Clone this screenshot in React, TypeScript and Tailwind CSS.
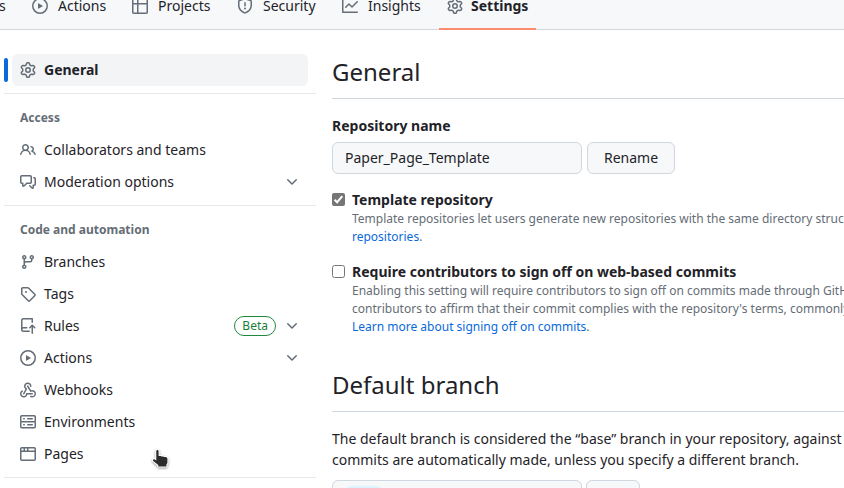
import React from "react";

const ICONS = {
  play: "M8 0a8 8 0 1 1 0 16A8 8 0 0 1 8 0ZM1.5 8a6.5 6.5 0 1 0 13 0 6.5 6.5 0 0 0-13 0Zm4.879-2.773 4.264 2.559a.25.25 0 0 1 0 .428l-4.264 2.559A.25.25 0 0 1 6 10.559V5.442a.25.25 0 0 1 .379-.215Z",
  table: "M0 1.75C0 .784.784 0 1.75 0h12.5C15.216 0 16 .784 16 1.75v12.5A1.75 1.75 0 0 1 14.25 16H1.75A1.75 1.75 0 0 1 0 14.25ZM6.5 6.5v8h7.75a.25.25 0 0 0 .25-.25V6.5Zm8-1.5V1.75a.25.25 0 0 0-.25-.25H6.5V5Zm-13 1.5v7.75c0 .138.112.25.25.25H5v-8ZM5 5V1.5H1.75a.25.25 0 0 0-.25.25V5Z",
  shield: "M7.467.133a1.748 1.748 0 0 1 1.066 0l5.25 1.68A1.75 1.75 0 0 1 15 3.48V7c0 1.566-.32 3.182-1.303 4.682-.983 1.498-2.585 2.813-5.032 3.855a1.697 1.697 0 0 1-1.33 0c-2.447-1.042-4.049-2.357-5.032-3.855C1.32 10.182 1 8.566 1 7V3.48a1.75 1.75 0 0 1 1.217-1.667Zm.61 1.429a.25.25 0 0 0-.153 0l-5.25 1.68a.25.25 0 0 0-.174.238V7c0 1.358.275 2.666 1.057 3.86.784 1.194 2.121 2.34 4.366 3.297a.196.196 0 0 0 .154 0c2.245-.956 3.582-2.104 4.366-3.298C13.225 9.666 13.5 8.36 13.5 7V3.48a.251.251 0 0 0-.174-.237l-5.25-1.68ZM8.75 4.75v3a.75.75 0 0 1-1.5 0v-3a.75.75 0 0 1 1.5 0ZM9 10.5a1 1 0 1 1-2 0 1 1 0 0 1 2 0Z",
  graph: "M1.5 1.75V13.5h13.75a.75.75 0 0 1 0 1.5H.75a.75.75 0 0 1-.75-.75V1.75a.75.75 0 0 1 1.5 0Zm14.28 2.53-5.25 5.25a.75.75 0 0 1-1.06 0L7 7.06 4.28 9.78a.751.751 0 0 1-1.042-.018.751.751 0 0 1-.018-1.042l3.25-3.25a.75.75 0 0 1 1.06 0L10 7.94l4.72-4.72a.751.751 0 0 1 1.042.018.751.751 0 0 1 .018 1.042Z",
  gear: "M8 0a8.2 8.2 0 0 1 .701.031C9.444.095 9.99.645 10.16 1.29l.288 1.107c.018.066.079.158.212.224.231.114.454.243.668.386.123.082.233.09.299.071l1.103-.303c.644-.176 1.392.021 1.82.63.27.385.506.792.704 1.218.315.675.111 1.422-.364 1.891l-.814.806c-.049.048-.098.147-.088.294.016.257.016.515 0 .772-.01.147.038.246.088.294l.814.806c.475.469.679 1.216.364 1.891a7.977 7.977 0 0 1-.704 1.217c-.428.61-1.176.807-1.82.63l-1.102-.302c-.067-.019-.177-.011-.3.071a5.909 5.909 0 0 1-.668.386c-.133.066-.194.158-.211.224l-.29 1.106c-.168.646-.715 1.196-1.458 1.26a8.006 8.006 0 0 1-1.402 0c-.743-.064-1.289-.614-1.458-1.26l-.289-1.106c-.018-.066-.079-.158-.212-.224a5.738 5.738 0 0 1-.668-.386c-.123-.082-.233-.09-.299-.071l-1.103.303c-.644.176-1.392-.021-1.82-.63a8.12 8.12 0 0 1-.704-1.218c-.315-.675-.111-1.422.363-1.891l.815-.806c.05-.048.098-.147.088-.294a6.214 6.214 0 0 1 0-.772c.01-.147-.038-.246-.088-.294l-.815-.806C.635 6.045.431 5.298.746 4.623a7.92 7.92 0 0 1 .704-1.217c.428-.61 1.176-.807 1.82-.63l1.102.302c.067.019.177.011.3-.071.214-.143.437-.272.668-.386.133-.066.194-.158.211-.224l.29-1.106C6.009.645 6.556.095 7.299.03 7.53.01 7.764 0 8 0Zm-.571 1.525c-.036.003-.108.036-.137.146l-.289 1.105c-.147.561-.549.967-.998 1.189-.173.086-.34.183-.5.29-.417.278-.97.423-1.529.27l-1.103-.303c-.109-.03-.175.016-.195.045-.22.312-.412.644-.573.99-.014.031-.021.11.059.19l.815.806c.411.406.562.957.53 1.456a4.709 4.709 0 0 0 0 .582c.032.499-.119 1.05-.53 1.456l-.815.806c-.081.08-.073.159-.059.19.162.346.353.677.573.989.02.03.085.076.195.046l1.102-.303c.56-.153 1.113-.008 1.53.27.161.107.328.204.501.29.447.222.85.629.997 1.189l.289 1.105c.029.109.101.143.137.146a6.6 6.6 0 0 0 1.142 0c.036-.003.108-.036.137-.146l.289-1.105c.147-.561.549-.967.998-1.189.173-.086.34-.183.5-.29.417-.278.97-.423 1.529-.27l1.103.303c.109.029.175-.016.195-.045.22-.313.411-.644.573-.99.014-.031.021-.11-.059-.19l-.815-.806c-.411-.406-.562-.957-.53-1.456a4.709 4.709 0 0 0 0-.582c-.032-.499.119-1.05.53-1.456l.815-.806c.081-.08.073-.159.059-.19a6.464 6.464 0 0 0-.573-.989c-.02-.03-.085-.076-.195-.046l-1.102.303c-.56.153-1.113.008-1.53-.27a4.44 4.44 0 0 0-.501-.29c-.447-.222-.85-.629-.997-1.189l-.289-1.105c-.029-.11-.101-.143-.137-.146a6.6 6.6 0 0 0-1.142 0ZM11 8a3 3 0 1 1-6 0 3 3 0 0 1 6 0ZM9.5 8a1.5 1.5 0 1 0-3.001.001A1.5 1.5 0 0 0 9.5 8Z",
  people: "M2 5.5a3.5 3.5 0 1 1 5.898 2.549 5.508 5.508 0 0 1 3.034 4.084.75.75 0 1 1-1.482.235 4 4 0 0 0-7.9 0 .75.75 0 0 1-1.482-.236A5.507 5.507 0 0 1 3.102 8.05 3.493 3.493 0 0 1 2 5.5ZM11 4a3.001 3.001 0 0 1 2.22 5.018 5.01 5.01 0 0 1 2.56 3.012.749.749 0 0 1-.885.954.752.752 0 0 1-.549-.514 3.507 3.507 0 0 0-2.522-2.372.75.75 0 0 1-.574-.73v-.352a.75.75 0 0 1 .416-.672A1.5 1.5 0 0 0 11 5.5.75.75 0 0 1 11 4Zm-5.5-.5a2 2 0 1 0-.001 3.999A2 2 0 0 0 5.5 3.5Z",
  discussion: "M1.75 1h8.5c.966 0 1.75.784 1.75 1.75v5.5A1.75 1.75 0 0 1 10.25 10H7.061l-2.574 2.573A1.458 1.458 0 0 1 2 11.543V10h-.25A1.75 1.75 0 0 1 0 8.25v-5.5C0 1.784.784 1 1.75 1ZM1.5 2.75v5.5c0 .138.112.25.25.25h1a.75.75 0 0 1 .75.75v2.19l2.72-2.72a.749.749 0 0 1 .53-.22h3.5a.25.25 0 0 0 .25-.25v-5.5a.25.25 0 0 0-.25-.25h-8.5a.25.25 0 0 0-.25.25Zm13 2a.25.25 0 0 0-.25-.25h-.5a.75.75 0 0 1 0-1.5h.5c.966 0 1.75.784 1.75 1.75v5.5A1.75 1.75 0 0 1 14.25 12H14v1.543a1.458 1.458 0 0 1-2.487 1.03L9.22 12.28a.749.749 0 0 1 .326-1.275.749.749 0 0 1 .734.215l2.22 2.22v-2.19a.75.75 0 0 1 .75-.75h1a.25.25 0 0 0 .25-.25Z",
  branch: "M9.5 3.25a2.25 2.25 0 1 1 3 2.122V6A2.5 2.5 0 0 1 10 8.5H6a1 1 0 0 0-1 1v1.128a2.251 2.251 0 1 1-1.5 0V5.372a2.25 2.25 0 1 1 1.5 0v1.836A2.493 2.493 0 0 1 6 7h4a1 1 0 0 0 1-1v-.628A2.25 2.25 0 0 1 9.5 3.25Zm-6 0a.75.75 0 1 0 1.5 0 .75.75 0 0 0-1.5 0Zm8.25-.75a.75.75 0 1 0 0 1.5.75.75 0 0 0 0-1.5ZM4.25 12a.75.75 0 1 0 0 1.5.75.75 0 0 0 0-1.5Z",
  tag: "M1 7.775V2.75C1 1.784 1.784 1 2.75 1h5.025c.464 0 .91.184 1.238.513l6.25 6.25a1.75 1.75 0 0 1 0 2.474l-5.026 5.026a1.75 1.75 0 0 1-2.474 0l-6.25-6.25A1.752 1.752 0 0 1 1 7.775Zm1.5 0c0 .066.026.13.073.177l6.25 6.25a.25.25 0 0 0 .354 0l5.025-5.025a.25.25 0 0 0 0-.354l-6.25-6.25a.25.25 0 0 0-.177-.073H2.75a.25.25 0 0 0-.25.25ZM6 5a1 1 0 1 1 0 2 1 1 0 0 1 0-2Z",
  push: "M1 2.5A2.5 2.5 0 0 1 3.5 0h8.75a.75.75 0 0 1 .75.75v3.5a.75.75 0 0 1-1.5 0V1.5h-8a1 1 0 0 0-1 1v6.708A2.493 2.493 0 0 1 3.5 9h3.25a.75.75 0 0 1 0 1.5H3.5a1 1 0 0 0 0 2h5.75a.75.75 0 0 1 0 1.5H3.5A2.5 2.5 0 0 1 1 11.5Zm13.23 7.79h-.001l-1.224-1.224v6.184a.75.75 0 0 1-1.5 0V9.066L10.28 10.29a.75.75 0 0 1-1.06-1.061l2.505-2.504a.75.75 0 0 1 1.06 0L15.29 9.23a.751.751 0 0 1-.018 1.042.751.751 0 0 1-1.042.018Z",
  webhook: "M5.5 4.25a2.25 2.25 0 0 1 4.5 0 .75.75 0 0 0 1.5 0 3.75 3.75 0 1 0-6.14 2.889l-2.272 4.258a.75.75 0 0 0 1.324.706L7 7.25a.75.75 0 0 0-.309-1.015A2.25 2.25 0 0 1 5.5 4.25ZM7.364 3.607a.75.75 0 0 1 1.03.257l2.608 4.349a3.75 3.75 0 1 1-.628 6.785.75.75 0 0 1 .752-1.299 2.25 2.25 0 1 0-.033-3.88.75.75 0 0 1-1.03-.256L7.107 4.636a.75.75 0 0 1 .257-1.03ZM2.9 8.776A.75.75 0 0 1 2.625 9.8 2.25 2.25 0 1 0 6 11.75a.75.75 0 0 1 .75-.751h5.5a.75.75 0 0 1 0 1.5H7.425a3.751 3.751 0 1 1-5.55-3.998.75.75 0 0 1 1.024.274Z",
  server: "M1.75 1h12.5c.966 0 1.75.784 1.75 1.75v4c0 .372-.116.717-.314 1 .198.283.314.628.314 1v4a1.75 1.75 0 0 1-1.75 1.75H1.75A1.75 1.75 0 0 1 0 12.75v-4c0-.358.109-.707.314-1a1.739 1.739 0 0 1-.314-1v-4C0 1.784.784 1 1.75 1ZM1.5 2.75v4c0 .138.112.25.25.25h12.5a.25.25 0 0 0 .25-.25v-4a.25.25 0 0 0-.25-.25H1.75a.25.25 0 0 0-.25.25Zm.25 5.75a.25.25 0 0 0-.25.25v4c0 .138.112.25.25.25h12.5a.25.25 0 0 0 .25-.25v-4a.25.25 0 0 0-.25-.25ZM7 4.75A.75.75 0 0 1 7.75 4h4.5a.75.75 0 0 1 0 1.5h-4.5A.75.75 0 0 1 7 4.75ZM7.75 10h4.5a.75.75 0 0 1 0 1.5h-4.5a.75.75 0 0 1 0-1.5ZM3 4.75A.75.75 0 0 1 3.75 4h.5a.75.75 0 0 1 0 1.5h-.5A.75.75 0 0 1 3 4.75ZM3.75 10h.5a.75.75 0 0 1 0 1.5h-.5a.75.75 0 0 1 0-1.5Z",
  browser: "M0 2.75C0 1.784.784 1 1.75 1h12.5c.966 0 1.75.784 1.75 1.75v10.5A1.75 1.75 0 0 1 14.25 15H1.75A1.75 1.75 0 0 1 0 13.25ZM14.5 6h-13v7.25c0 .138.112.25.25.25h12.5a.25.25 0 0 0 .25-.25Zm-6-3.5v2h6V2.75a.25.25 0 0 0-.25-.25ZM5 2.5v2h2v-2Zm-3.25 0a.25.25 0 0 0-.25.25V4.5h2v-2Z",
  chevron: "M12.78 5.22a.749.749 0 0 1 0 1.06l-4.25 4.25a.749.749 0 0 1-1.06 0L3.22 6.28a.749.749 0 1 1 1.06-1.06L8 8.939l3.72-3.719a.749.749 0 0 1 1.06 0Z",
};

type IconName = keyof typeof ICONS;

function Icon({ name }: { name: IconName }) {
  return (
    <svg viewBox="0 0 16 16" className="size-4 shrink-0 fill-[#656d76]" aria-hidden="true">
      <path d={ICONS[name]} />
    </svg>
  );
}

function Tab({ icon, label, width, active }: { icon: IconName; label: string; width: string; active?: boolean }) {
  return (
    <div className={`flex h-full shrink-0 items-center pl-2 ${width} ${active ? "gap-2 border-b-2 border-[#fd8c73] pt-0.5 font-bold" : "gap-2.5"}`}>
      <Icon name={icon} />
      <span>{label}</span>
    </div>
  );
}

function NavItem({ icon, label, badge, expandable }: { icon: IconName; label: string; badge?: string; expandable?: boolean }) {
  return (
    <li className="flex h-8 items-center px-2">
      <Icon name={icon} />
      <span className="ml-2 flex-1">{label}</span>
      {badge && (
        <span className="mr-2 flex h-5 items-center rounded-full border border-[#1f883d] px-[7px] text-xs leading-[18px] text-[#1a7f37]">{badge}</span>
      )}
      {expandable && <Icon name="chevron" />}
    </li>
  );
}

function NavGroup({ title, children }: { title: string; children: React.ReactNode }) {
  return (
    <section className="border-t border-[#e6e9ec] px-2 pb-[7px]">
      <h3 className="px-2 pt-[15px] pb-[7px] text-xs leading-[18px] font-bold text-[#656d76]">{title}</h3>
      <ul>{children}</ul>
    </section>
  );
}

export default function App() {
  return (
    <div className="h-[488px] w-[844px] overflow-hidden bg-white font-['Noto_Sans',sans-serif] text-sm leading-[21px] text-[#1f2328]">
      <header className="flex h-[30px] items-end border-b border-[#d0d7de] bg-[#f6f8fa]">
        <nav className="-mb-px flex h-12 shrink-0 leading-5 whitespace-nowrap">
          <div className="flex w-6 shrink-0 items-center">
            <span className="-ml-px">s</span>
          </div>
          <Tab icon="play" label="Actions" width="w-[100px]" />
          <Tab icon="table" label="Projects" width="w-[105px]" />
          <Tab icon="shield" label="Security" width="w-[105px]" />
          <Tab icon="graph" label="Insights" width="w-[105px]" />
          <Tab icon="gear" label="Settings" width="w-[97px]" active />
        </nav>
      </header>
      <div className="flex">
        <aside className="ml-1 w-[312px] shrink-0 pt-6 leading-5">
          <div className="mb-[7px] flex items-center gap-1">
            <div className="h-6 w-1 rounded-md bg-[#0969da]" />
            <div className="flex h-8 w-[296px] items-center gap-2 rounded-md bg-[#f3f4f6] px-2 font-bold">
              <Icon name="gear" />
              <span>General</span>
            </div>
          </div>
          <NavGroup title="Access">
            <NavItem icon="people" label="Collaborators and teams" />
            <NavItem icon="discussion" label="Moderation options" expandable />
          </NavGroup>
          <NavGroup title="Code and automation">
            <NavItem icon="branch" label="Branches" />
            <NavItem icon="tag" label="Tags" />
            <NavItem icon="push" label="Rules" badge="Beta" expandable />
            <NavItem icon="play" label="Actions" expandable />
            <NavItem icon="webhook" label="Webhooks" />
            <NavItem icon="server" label="Environments" />
            <NavItem icon="browser" label="Pages" />
          </NavGroup>
          <div className="h-px bg-[#e6e9ec]" />
        </aside>
        <main className="ml-4 w-[512px] shrink-0 overflow-hidden pt-6 whitespace-nowrap">
          <h2 className="h-[45px] border-b border-[#d0d7de] text-2xl leading-9">General</h2>
          <div className="mt-4 font-bold">Repository name</div>
          <div className="mt-1.5 flex gap-[5px] leading-5">
            <div className="flex h-8 w-[250px] items-center rounded-md border border-[#d0d7de] bg-[#f6f8fa] px-3">Paper_Page_Template</div>
            <div className="flex h-8 w-[88px] items-center justify-center rounded-md border border-[#d0d7de] bg-[#f6f8fa]">Rename</div>
          </div>
          <div className="mt-[15px] flex gap-[7px]">
            <svg viewBox="0 0 13 13" className="mt-1 size-[13px] shrink-0">
              <rect width="13" height="13" rx="2" fill="#767676" />
              <path d="M2.6 6.8 5.1 9.2 10.3 3.2" fill="none" stroke="#fff" strokeWidth="2" />
            </svg>
            <div>
              <div className="font-bold">Template repository</div>
              <p className="text-xs leading-[18px] text-[#656d76]">
                Template repositories let users generate new repositories with the same directory structure
                <br />
                <span className="text-[#0969da]">repositories</span>.
              </p>
            </div>
          </div>
          <div className="mt-[15px] flex gap-[7px]">
            <div className="mt-1 size-[13px] shrink-0 rounded-[2.5px] border border-[#767676] bg-white" />
            <div>
              <div className="font-bold">Require contributors to sign off on web-based commits</div>
              <p className="text-xs leading-[18px] text-[#656d76]">
                Enabling this setting will require contributors to sign off on commits made through GitHub's
                <br />
                contributors to affirm that their commit complies with the repository's terms, commonly the
                <br />
                <span className="text-[#0969da]">Learn more about signing off on commits</span>.
              </p>
            </div>
          </div>
          <h2 className="mt-[31px] h-[45px] border-b border-[#d0d7de] text-2xl leading-9">Default branch</h2>
          <p className="mt-4">
            The default branch is considered the “base” branch in your repository, against which
            <br />
            commits are automatically made, unless you specify a different branch.
          </p>
          <div className="mt-[10px] flex gap-1">
            <div className="h-8 w-[250px] rounded-md border border-[#d0d7de] bg-[#f6f8fa] px-3 pt-[5px]">
              <div className="h-5 w-[38px] rounded-md bg-[#ddf4ff]" />
            </div>
            <div className="h-8 w-[54px] rounded-md border border-[#d0d7de] bg-[#f6f8fa]" />
          </div>
        </main>
      </div>
      <svg viewBox="0 0 20 22" className="absolute top-[448px] left-[151px] h-[22px] w-5 drop-shadow-[0_1px_1px_rgba(0,0,0,0.4)]">
        <path
          d="M5.3 3.1c0-1.5 2.3-1.5 2.3 0V8h2.2l.6.5h2l.6.5h2l1.4 1.3V15l-1 1.5v2H7.3v-1.4L2.2 13c-.8-1.3.5-2.3 1.6-1.6l1.5 1Z"
          fill="#2b2b2b"
          stroke="#fff"
          strokeWidth="2.2"
          strokeLinejoin="round"
          paintOrder="stroke"
        />
      </svg>
    </div>
  );
}
